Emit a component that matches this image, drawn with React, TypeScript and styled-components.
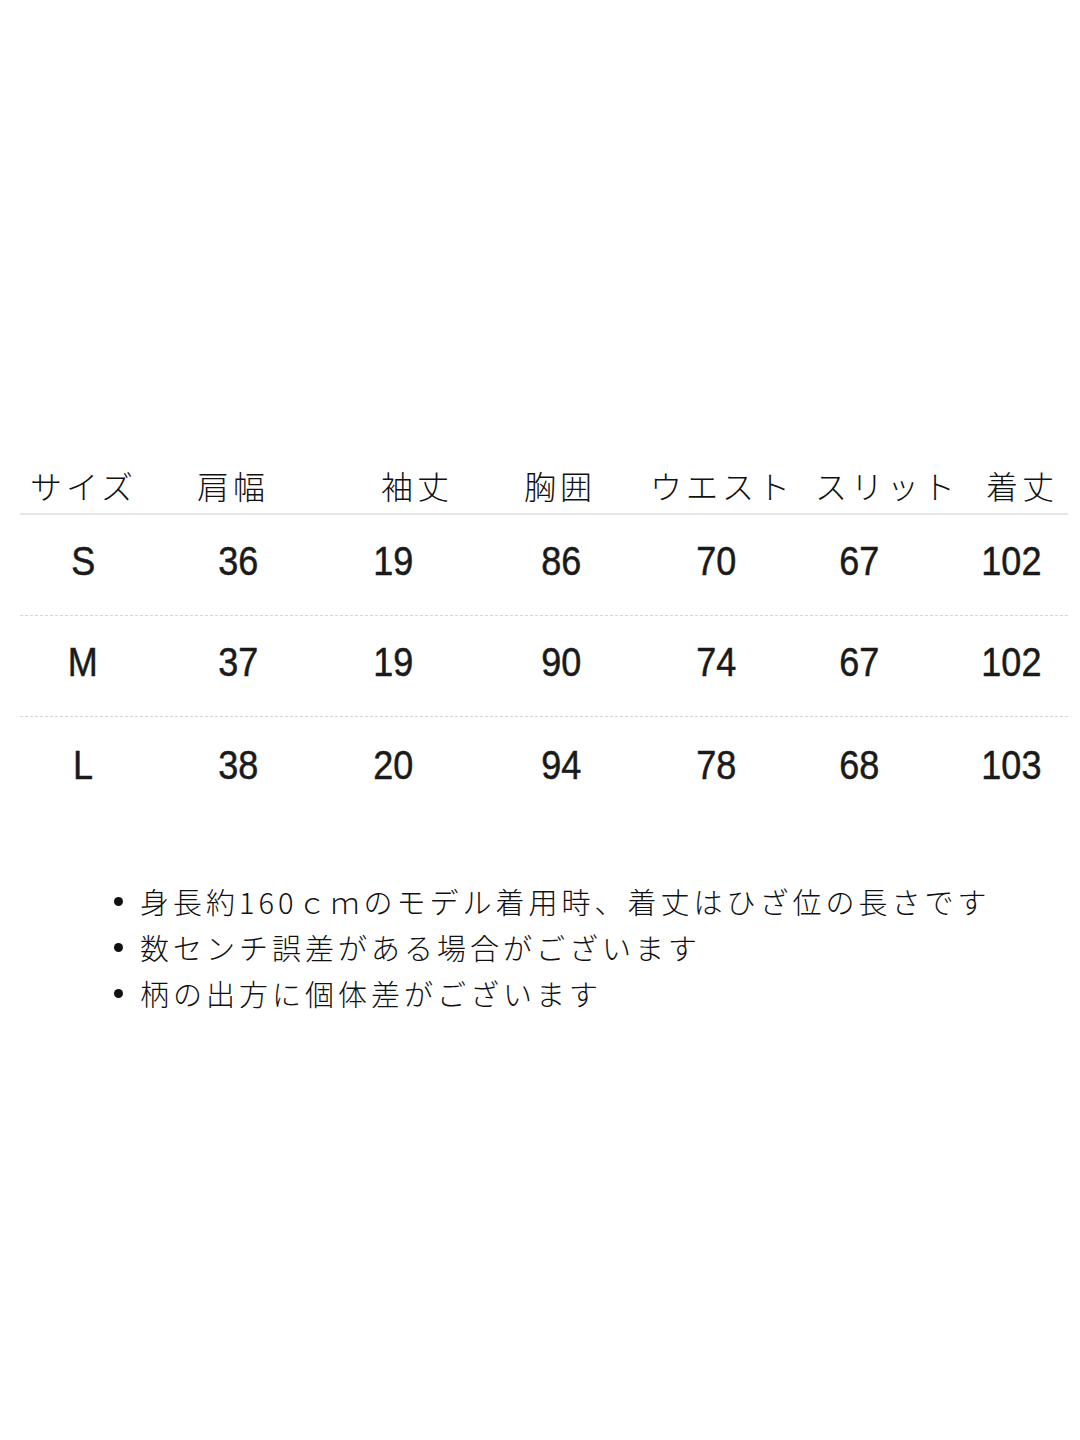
import React from "react";
import styled, { createGlobalStyle } from "styled-components";

const Global = createGlobalStyle`
  html, body { margin: 0; padding: 0; background: #fff; overflow-x: hidden; }
  body { font-family: "Noto Sans CJK JP", "Noto Sans", sans-serif; color: #111; }
`;

const Page = styled.div`
  width: 1080px;
  min-height: 1440px;
  padding-top: 466px;
  box-sizing: border-box;
  display: flex;
  flex-direction: column;
`;

const Table = styled.div`
  display: flex;
  flex-direction: column;
  margin: 0 12px 0 20px;
`;

const HeadRow = styled.div`
  display: grid;
  grid-template-columns: 167px 184px 143px 126px 165px 171px auto;
  padding-left: 10px;
  height: 49px;
  box-sizing: border-box;
  padding-bottom: 12px;
  align-items: end;
  border-bottom: 2px solid #e6e6e6;
`;

const HeadCell = styled.div`
  font-family: "Noto Sans CJK JP", sans-serif;
  font-weight: 300;
  font-size: 32px;
  letter-spacing: 4px;
  white-space: nowrap;
  color: #111;
  line-height: 1;
`;

const DataRow = styled.div<{ $last?: boolean }>`
  display: grid;
  grid-template-columns: 126px 184px 126px 210px 100px 186px 118px;
  height: ${(p) => (p.$last ? 104 : 101)}px;
  box-sizing: border-box;
  padding-bottom: 8px;
  align-items: center;
  border-bottom: ${(p) => (p.$last ? "none" : "1px dashed #d6d6d6")};
`;

const Cell = styled.div`
  text-align: center;
`;

const Num = styled.span`
  display: inline-block;
  font-family: "Liberation Sans", Arial, sans-serif;
  font-size: 40px;
  color: #1a1a1a;
  -webkit-text-stroke: 0.5px #1a1a1a;
  transform: scaleX(0.9);
  line-height: 1;
`;

const Notes = styled.ul`
  list-style: none;
  margin: 57px 0 0 0;
  padding: 0 0 0 114px;
  display: flex;
  flex-direction: column;
`;

const Note = styled.li`
  display: flex;
  align-items: center;
  height: 46px;
  font-family: "Noto Sans CJK JP", sans-serif;
  font-weight: 300;
  font-size: 29px;
  letter-spacing: 4px;
  color: #111;
  white-space: nowrap;
`;

const Dot = styled.span`
  width: 9px;
  height: 9px;
  border-radius: 50%;
  background: #111;
  margin-right: 17px;
  flex: none;
`;

const headers = ["サイズ", "肩幅", "袖丈", "胸囲", "ウエスト", "スリット", "着丈"];
const rows = [
  ["S", "36", "19", "86", "70", "67", "102"],
  ["M", "37", "19", "90", "74", "67", "102"],
  ["L", "38", "20", "94", "78", "68", "103"],
];
const notes = [
  "身長約160ｃｍのモデル着用時、着丈はひざ位の長さです",
  "数センチ誤差がある場合がございます",
  "柄の出方に個体差がございます",
];

export default function App() {
  return (
    <>
      <Global />
      <Page>
        <Table>
          <HeadRow>
            {headers.map((h) => (
              <HeadCell key={h}>{h}</HeadCell>
            ))}
          </HeadRow>
          {rows.map((r, i) => (
            <DataRow key={r[0]} $last={i === rows.length - 1}>
              {r.map((v, j) => (
                <Cell key={j}>
                  <Num>{v}</Num>
                </Cell>
              ))}
            </DataRow>
          ))}
        </Table>
        <Notes>
          {notes.map((n) => (
            <Note key={n}>
              <Dot />
              {n}
            </Note>
          ))}
        </Notes>
      </Page>
    </>
  );
}
